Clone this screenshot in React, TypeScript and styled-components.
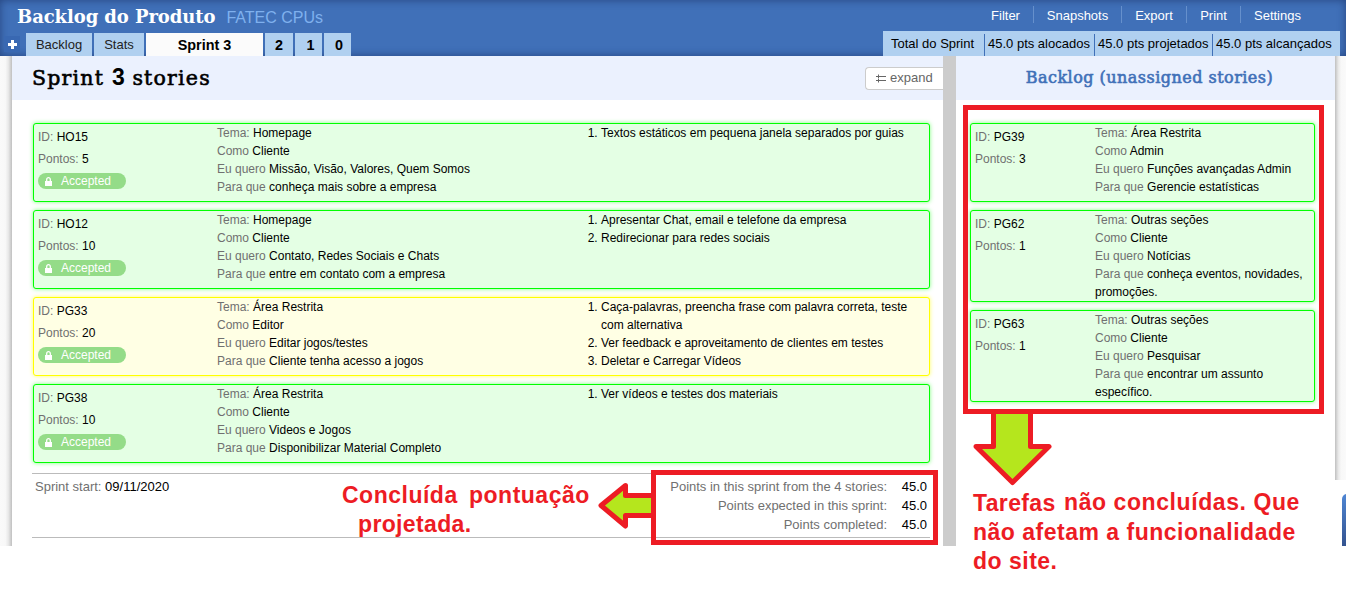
import React from "react";
import styled, { createGlobalStyle, css } from "styled-components";

const GlobalStyle = createGlobalStyle`
  * { box-sizing: border-box; }
  body {
    margin: 0;
    background: #fff;
    color: #000;
    font: 12px/18px "Liberation Sans", Arial, sans-serif;
    overflow: hidden;
  }
`;

const slab = css`
  font-family: "DejaVu Serif", serif;
  margin: 0;
  white-space: nowrap;
`;

const Page = styled.div`
  position: relative;
  width: 1346px;
  height: 602px;
  overflow: hidden;
`;

const Header = styled.header`
  display: flex;
  justify-content: space-between;
  height: 56px;
  background: #4070b8;
  box-shadow: inset 0 0 9px rgba(20, 40, 90, 0.6);
`;

const HeaderSide = styled.div<{ $end?: boolean }>`
  display: flex;
  flex-direction: column;
  justify-content: space-between;
  align-items: ${(p) => (p.$end ? "flex-end" : "flex-start")};
  padding-right: ${(p) => (p.$end ? "6px" : "0")};
`;

const Brand = styled.div`
  display: flex;
  align-items: baseline;
  gap: 11px;
  padding: 5px 0 0 17px;
  line-height: 24px;
`;

const ProductName = styled.h1`
  ${slab}
  color: #fff;
  font-size: 18px;
  font-weight: bold;
  letter-spacing: -0.08px;
`;

const Company = styled.span`
  color: #7fb0ee;
  font-size: 16px;
`;

const Tabs = styled.nav`
  display: flex;
  align-items: flex-end;
`;

const AddButton = styled.div`
  display: flex;
  align-items: center;
  justify-content: center;
  width: 16px;
  height: 16px;
  margin: 0 6px 4px 4px;
  background: #3968b2;
`;

const Tab = styled.div<{ $w: number; $shift?: number; $kind?: "active" | "number" }>`
  width: ${(p) => p.$w}px;
  height: 23px;
  margin-right: 2px;
  padding-left: ${(p) => p.$shift ?? 0}px;
  background: ${(p) => (p.$kind === "active" ? "#fbfbfb" : "#b0d0f0")};
  color: ${(p) => (p.$kind ? "#000" : "#222")};
  font-size: ${(p) => (p.$kind ? 14.4 : 13)}px;
  font-weight: ${(p) => (p.$kind ? "bold" : "normal")};
  line-height: ${(p) => (p.$kind ? 24 : 23)}px;
  text-align: center;
`;

const Menu = styled.nav`
  display: flex;
  padding: 6px 26px 0 0;
`;

const MenuItem = styled.span<{ $w: number }>`
  width: ${(p) => p.$w}px;
  height: 17px;
  color: #fff;
  font-size: 13px;
  line-height: 19px;
  text-align: center;
  & + & { border-left: 1px solid #6690cc; }
`;

const Totals = styled.div`
  display: flex;
  align-items: flex-end;
  height: 25px;
  padding-left: 8px;
  background: #b0d0f0;
`;

const Total = styled.span<{ $w: number }>`
  width: ${(p) => p.$w}px;
  height: 22px;
  font-size: 13px;
  line-height: 19px;
  white-space: nowrap;
  & + & { padding-left: 3px; border-left: 1px solid #4070b8; }
`;

const Body = styled.div`
  display: flex;
  height: 490px;
`;

const Gutter = styled.div<{ $right?: boolean }>`
  width: ${(p) => (p.$right ? 11 : 12)}px;
  height: ${(p) => (p.$right ? "424px" : "100%")};
  background: linear-gradient(
    ${(p) => (p.$right ? "to left" : "to right")},
    #fafafa 0, #f8f8f8 45%, #e8e8e8 70%, #c0c0c0 100%
  );
`;

const Main = styled.main`
  width: 931px;
`;

const Aside = styled.aside`
  width: 379px;
`;

const Divider = styled.div`
  width: 13px;
  background: #ccc;
`;

const PanelHead = styled.div<{ $center?: boolean }>`
  display: flex;
  align-items: center;
  justify-content: ${(p) => (p.$center ? "center" : "space-between")};
  height: 44px;
  padding-left: ${(p) => (p.$center ? 8 : 20)}px;
  background: #ebf1fe;
`;

const SprintTitle = styled.h2`
  ${slab}
  padding-bottom: 2px;
  font-size: 20.5px;
  font-weight: normal;
  letter-spacing: 1.2px;
  -webkit-text-stroke: 0.6px #000;
  b {
    font-family: "Liberation Sans", sans-serif;
    font-size: 23px;
    letter-spacing: 0;
    -webkit-text-stroke: 0;
  }
`;

const BacklogTitle = styled.h2`
  ${slab}
  color: #4070b8;
  font-size: 16px;
  font-weight: normal;
  letter-spacing: 0.47px;
  -webkit-text-stroke: 0.6px #4070b8;
`;

const Expand = styled.div`
  display: flex;
  align-items: center;
  gap: 4px;
  width: 78px;
  height: 23px;
  padding-left: 10px;
  border: 1px solid #ccc;
  border-right: 0;
  border-radius: 4px 0 0 4px;
  background: #fff;
  color: #666;
  font-size: 13px;
`;

const Stories = styled.div<{ $aside?: boolean }>`
  display: flex;
  flex-direction: column;
  gap: 8px;
  padding: ${(p) => (p.$aside ? "23px 20px 0 14px" : "23px 13px 0 21px")};
`;

const Card = styled.article<{ $yellow?: boolean }>`
  display: flex;
  min-height: 79px;
  border: 1px solid ${(p) => (p.$yellow ? "#ff0" : "#0f0")};
  border-radius: 3px;
  background: ${(p) => (p.$yellow ? "#ffffe4" : "#e4ffe4")};
  box-shadow: 0 0 4px ${(p) => (p.$yellow ? "rgba(255,255,0,.6)" : "rgba(0,255,0,.5)")};
`;

const Facts = styled.div<{ $aside?: boolean }>`
  width: ${(p) => (p.$aside ? 124 : 183)}px;
  padding: 2px 0 0 4px;
  line-height: 22px;
`;

const Label = styled.span`
  color: #707070;
`;

const Narrative = styled.div<{ $aside?: boolean }>`
  width: ${(p) => (p.$aside ? 215 : 368)}px;
`;

const Criteria = styled.ol`
  width: 340px;
  margin: 0;
  padding: 0 16px 0 16px;
`;

const Badge = styled.div`
  display: flex;
  align-items: center;
  gap: 9px;
  width: 88px;
  height: 16px;
  margin-top: 3px;
  padding-left: 6px;
  border-radius: 8px;
  background: #94dc88;
  color: #fff;
  line-height: 16px;
`;

const Summary = styled.footer`
  display: flex;
  justify-content: space-between;
  height: 65px;
  margin: 10px 13px 0 20px;
  padding: 3px 3px 0;
  border: solid #bbb;
  border-width: 1px 0;
  font-size: 13px;
  line-height: 19px;
`;

const Points = styled.div`
  display: grid;
  grid-template-columns: auto 40px;
  align-content: start;
  text-align: right;
`;

const Frame = styled.div<{ $x: number; $y: number; $w: number; $h: number }>`
  position: absolute;
  left: ${(p) => p.$x}px;
  top: ${(p) => p.$y}px;
  width: ${(p) => p.$w}px;
  height: ${(p) => p.$h}px;
  border: 5px solid #ed1c24;
`;

const Arrow = styled.svg<{ $x: number; $y: number }>`
  position: absolute;
  left: ${(p) => p.$x}px;
  top: ${(p) => p.$y}px;
  fill: #b5e61d;
  stroke: #ed1c24;
  stroke-width: 5;
  stroke-linejoin: round;
`;

const Note = styled.div<{ $x: number; $y: number; $spacing?: number }>`
  position: absolute;
  left: ${(p) => p.$x}px;
  top: ${(p) => p.$y}px;
  color: #ed1c24;
  font-size: 23px;
  font-weight: bold;
  line-height: 29px;
  letter-spacing: ${(p) => p.$spacing ?? 0.5}px;
  white-space: pre;
`;

const CornerButton = styled.div`
  position: absolute;
  left: 1342px;
  top: 494px;
  width: 10px;
  height: 52px;
  border-radius: 5px 0 0 0;
  background: linear-gradient(#4f86d4, #34538f);
`;

type Story = {
  id: string;
  points: number;
  theme: string;
  who: string;
  want: string;
  why: string;
  criteria?: string[];
  yellow?: boolean;
};

const sprint: Story[] = [
  { id: "HO15", points: 5, theme: "Homepage", who: "Cliente", want: "Missão, Visão, Valores, Quem Somos", why: "conheça mais sobre a empresa", criteria: ["Textos estáticos em pequena janela separados por guias"] },
  { id: "HO12", points: 10, theme: "Homepage", who: "Cliente", want: "Contato, Redes Sociais e Chats", why: "entre em contato com a empresa", criteria: ["Apresentar Chat, email e telefone da empresa", "Redirecionar para redes sociais"] },
  { id: "PG33", points: 20, theme: "Área Restrita", who: "Editor", want: "Editar jogos/testes", why: "Cliente tenha acesso a jogos", criteria: ["Caça-palavras, preencha frase com palavra correta, teste com alternativa", "Ver feedback e aproveitamento de clientes em testes", "Deletar e Carregar Vídeos"], yellow: true },
  { id: "PG38", points: 10, theme: "Área Restrita", who: "Cliente", want: "Videos e Jogos", why: "Disponibilizar Material Completo", criteria: ["Ver vídeos e testes dos materiais"] },
];

const backlog: Story[] = [
  { id: "PG39", points: 3, theme: "Área Restrita", who: "Admin", want: "Funções avançadas Admin", why: "Gerencie estatísticas" },
  { id: "PG62", points: 1, theme: "Outras seções", who: "Cliente", want: "Notícias", why: "conheça eventos, novidades, promoções." },
  { id: "PG63", points: 1, theme: "Outras seções", who: "Cliente", want: "Pesquisar", why: "encontrar um assunto específico." },
];

const LockIcon = () => (
  <svg width="8" height="10" viewBox="0 0 8 10">
    <path d="M2.700 6V3.500a1.800 1.800 0 0 1 3.600 0V6" fill="none" stroke="#fff" strokeWidth="1.300" />
    <rect x="1" y="5" width="7" height="5" fill="#fff" />
  </svg>
);

const ExpandIcon = () => (
  <svg width="10" height="9" viewBox="0 0 10 9" fill="none" stroke="#666" strokeWidth="1">
    <path d="M0 2.500H10M2.500 0.500V4.500M0 6.500H10M2.500 5V8.500" />
  </svg>
);

function StoryCard({ story, aside }: { story: Story; aside?: boolean }) {
  return (
    <Card $yellow={story.yellow}>
      <Facts $aside={aside}>
        <div><Label>ID:</Label> {story.id}</div>
        <div><Label>Pontos:</Label> {story.points}</div>
        {!aside && <Badge><LockIcon />Accepted</Badge>}
      </Facts>
      <Narrative $aside={aside}>
        <div><Label>Tema:</Label> {story.theme}</div>
        <div><Label>Como</Label> {story.who}</div>
        <div><Label>Eu quero</Label> {story.want}</div>
        <div><Label>Para que</Label> {story.why}</div>
      </Narrative>
      {story.criteria && (
        <Criteria>{story.criteria.map((c) => <li key={c}>{c}</li>)}</Criteria>
      )}
    </Card>
  );
}

export default function App() {
  return (
    <Page>
      <GlobalStyle />
      <Header>
        <HeaderSide>
          <Brand>
            <ProductName>Backlog do Produto</ProductName>
            <Company>FATEC CPUs</Company>
          </Brand>
          <Tabs>
            <AddButton>
              <svg width="9" height="9" viewBox="0 0 9 9"><path d="M4.500 0V9M0 4.500H9" stroke="#fff" strokeWidth="3" /></svg>
            </AddButton>
            <Tab $w={66}>Backlog</Tab>
            <Tab $w={50}>Stats</Tab>
            <Tab $w={117} $kind="active">Sprint 3</Tab>
            <Tab $w={28} $kind="number">2</Tab>
            <Tab $w={27} $kind="number" $shift={4}>1</Tab>
            <Tab $w={27} $kind="number" $shift={3}>0</Tab>
          </Tabs>
        </HeaderSide>
        <HeaderSide $end>
          <Menu>
            <MenuItem $w={55}>Filter</MenuItem>
            <MenuItem $w={88}>Snapshots</MenuItem>
            <MenuItem $w={65}>Export</MenuItem>
            <MenuItem $w={54}>Print</MenuItem>
            <MenuItem $w={74}>Settings</MenuItem>
          </Menu>
          <Totals>
            <Total $w={93}>Total do Sprint</Total>
            <Total $w={110}>45.0 pts alocados</Total>
            <Total $w={118}>45.0 pts projetados</Total>
            <Total $w={128}>45.0 pts alcançados</Total>
          </Totals>
        </HeaderSide>
      </Header>
      <Body>
        <Gutter />
        <Main>
          <PanelHead>
            <SprintTitle>Sprint <b>3</b> stories</SprintTitle>
            <Expand><ExpandIcon />expand</Expand>
          </PanelHead>
          <Stories>
            {sprint.map((s) => <StoryCard key={s.id} story={s} />)}
          </Stories>
          <Summary>
            <div><Label>Sprint start:</Label> 09/11/2020</div>
            <Points>
              <Label>Points in this sprint from the 4 stories:</Label><span>45.0</span>
              <Label>Points expected in this sprint:</Label><span>45.0</span>
              <Label>Points completed:</Label><span>45.0</span>
            </Points>
          </Summary>
        </Main>
        <Divider />
        <Aside>
          <PanelHead $center>
            <BacklogTitle>Backlog (unassigned stories)</BacklogTitle>
          </PanelHead>
          <Stories $aside>
            {backlog.map((s) => <StoryCard key={s.id} story={s} aside />)}
          </Stories>
        </Aside>
        <Gutter $right />
      </Body>
      <CornerButton />
      <Arrow $x={973} $y={409} width="80" height="78">
        <path d="M20.500 1V37.500H3L39.500 73.500L76 37.500H57.500V1" />
      </Arrow>
      <Arrow $x={596} $y={481} width="60" height="50">
        <path d="M58 14.500H29.500V4.500L5 24.500L29.500 45V34.500H58" />
      </Arrow>
      <Frame $x={963} $y={105} $w={361} $h={309} />
      <Frame $x={651} $y={470} $w={287} $h={75} />
      <Note $x={342} $y={481}>Concluída</Note>
      <Note $x={469} $y={481}>pontuação</Note>
      <Note $x={358} $y={510} $spacing={0.35}>projetada.</Note>
      <Note $x={973} $y={489} $spacing={0.35}>Tarefas</Note>
      <Note $x={1064} $y={488} $spacing={0.58}>não concluídas. Que</Note>
      <Note $x={973} $y={518}>não afetam a funcionalidade</Note>
      <Note $x={973} $y={547}>do site.</Note>
    </Page>
  );
}
